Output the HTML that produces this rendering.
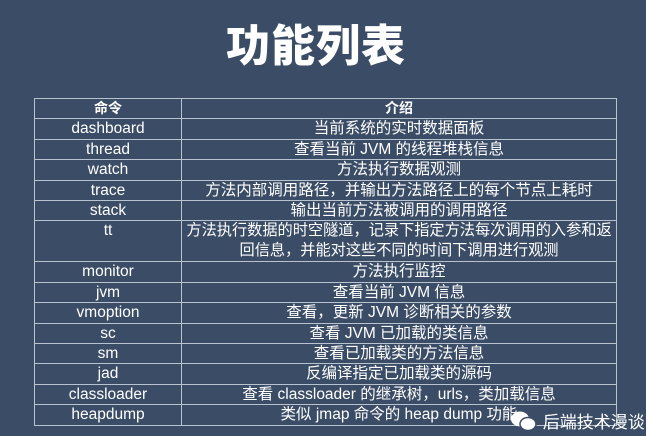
<!DOCTYPE html>
<html><head><meta charset="utf-8"><style>
body{margin:0;width:646px;height:436px;background:#3b4d66;overflow:hidden;font-family:"Liberation Sans","Noto Sans CJK SC",sans-serif;color:#fff;position:relative}
h1{position:absolute;top:10px;left:0;width:632px;text-align:center;margin:0;font-size:44px;font-weight:900;font-family:"Noto Sans CJK SC",sans-serif;letter-spacing:1px}
table{position:absolute;left:34px;top:98px;width:583px;border-collapse:collapse;font-size:15.5px;line-height:19.4px}
td,th{border:1px solid #b9c3d0;text-align:center;padding:0 2px;height:19.4px;vertical-align:top}
th{font-weight:bold;font-size:14px}
td:first-child,th:first-child{width:142px}
.wm{position:absolute;left:510px;top:408px;font-size:17px;display:flex;align-items:center}
</style></head><body>
<h1>功能列表</h1>
<table>
<tr><th>命令</th><th>介绍</th></tr>
<tr><td>dashboard</td><td>当前系统的实时数据面板</td></tr>
<tr><td>thread</td><td>查看当前 JVM 的线程堆栈信息</td></tr>
<tr><td>watch</td><td>方法执行数据观测</td></tr>
<tr><td>trace</td><td>方法内部调用路径，并输出方法路径上的每个节点上耗时</td></tr>
<tr><td>stack</td><td>输出当前方法被调用的调用路径</td></tr>
<tr><td style="height:40px">tt</td><td style="padding:0;font-size:15.2px">方法执行数据的时空隧道，记录下指定方法每次调用的入参和返<br>回信息，并能对这些不同的时间下调用进行观测</td></tr>
<tr><td>monitor</td><td>方法执行监控</td></tr>
<tr><td>jvm</td><td>查看当前 JVM 信息</td></tr>
<tr><td>vmoption</td><td>查看，更新 JVM 诊断相关的参数</td></tr>
<tr><td>sc</td><td>查看 JVM 已加载的类信息</td></tr>
<tr><td>sm</td><td>查看已加载类的方法信息</td></tr>
<tr><td>jad</td><td>反编译指定已加载类的源码</td></tr>
<tr><td>classloader</td><td>查看 classloader 的继承树，urls，类加载信息</td></tr>
<tr><td>heapdump</td><td>类似 jmap 命令的 heap dump 功能</td></tr>
</table>
<div class="wm"><svg width="28" height="22" viewBox="0 0 28 22"><ellipse cx="10" cy="9" rx="9" ry="7.5" fill="#fff"/><ellipse cx="18" cy="14" rx="8" ry="6.5" fill="#fff" stroke="#3b4d66" stroke-width="1.5"/></svg>&nbsp;后端技术漫谈</div>
</body></html>
